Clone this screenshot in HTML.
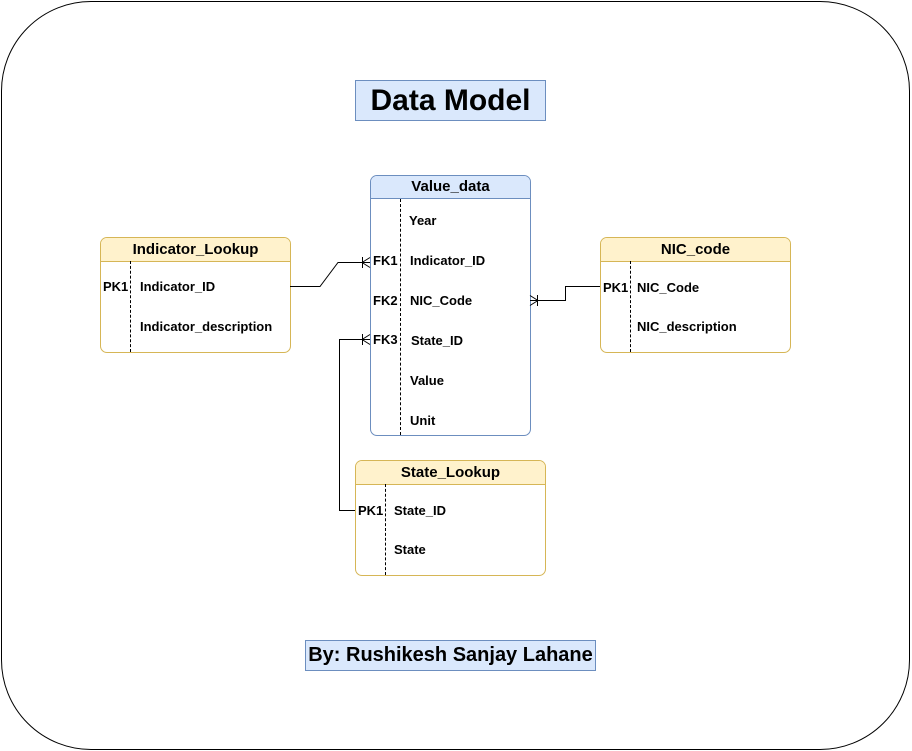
<!DOCTYPE html><html><head><style>
body{margin:0;width:912px;height:751px;background:#fff;font-family:"Liberation Sans",Arial,sans-serif;position:relative;overflow:hidden}
.a{position:absolute;box-sizing:border-box}
.t{position:absolute;font-weight:bold;font-size:13px;color:#000;white-space:nowrap;line-height:16px;margin-top:1px}
.tb{border-radius:7px;overflow:hidden}
.h{position:absolute;left:0;right:0;top:0;font-weight:bold;font-size:15px;text-align:center}
</style></head><body>
<div class="a" style="left:1px;top:1px;width:909px;height:749px;border:1px solid #000;border-radius:90px"></div>
<div class="a" style="left:355px;top:80px;width:191px;height:41px;background:#dae8fc;border:1px solid #6c8ebf;font-weight:bold;font-size:30px;text-align:center;line-height:39px">Data Model</div>
<div class="a" style="left:305px;top:640px;width:291px;height:31px;background:#dae8fc;border:1px solid #6c8ebf;font-weight:bold;font-size:20px;text-align:center;line-height:29px;white-space:nowrap">By: Rushikesh Sanjay Lahane</div>

<div class="a tb" style="left:370px;top:175px;width:161px;height:261px;border:1px solid #6c8ebf">
<div class="h" style="height:22px;background:#dae8fc;border-bottom:1px solid #6c8ebf;line-height:22px">Value_data</div></div>
<div class="a" style="left:400px;top:199px;height:236px;border-left:1px dashed #000"></div>
<div class="t" style="left:409px;top:212px">Year</div>
<div class="t" style="left:373px;top:252px">FK1</div><div class="t" style="left:410px;top:252px">Indicator_ID</div>
<div class="t" style="left:373px;top:292px">FK2</div><div class="t" style="left:410px;top:292px">NIC_Code</div>
<div class="t" style="left:373px;top:331px">FK3</div><div class="t" style="left:411px;top:332px">State_ID</div>
<div class="t" style="left:410px;top:372px">Value</div>
<div class="t" style="left:410px;top:412px">Unit</div>

<div class="a tb" style="left:100px;top:237px;width:191px;height:116px;border:1px solid #d6b656">
<div class="h" style="height:23px;background:#fff2cc;border-bottom:1px solid #d6b656;line-height:23px">Indicator_Lookup</div></div>
<div class="a" style="left:130px;top:261px;height:91px;border-left:1px dashed #000"></div>
<div class="t" style="left:103px;top:278px">PK1</div><div class="t" style="left:140px;top:278px">Indicator_ID</div>
<div class="t" style="left:140px;top:318px">Indicator_description</div>

<div class="a tb" style="left:600px;top:237px;width:191px;height:116px;border:1px solid #d6b656">
<div class="h" style="height:23px;background:#fff2cc;border-bottom:1px solid #d6b656;line-height:23px">NIC_code</div></div>
<div class="a" style="left:630px;top:261px;height:91px;border-left:1px dashed #000"></div>
<div class="t" style="left:603px;top:279px">PK1</div><div class="t" style="left:637px;top:279px">NIC_Code</div>
<div class="t" style="left:637px;top:318px">NIC_description</div>

<div class="a tb" style="left:355px;top:460px;width:191px;height:116px;border:1px solid #d6b656">
<div class="h" style="height:23px;background:#fff2cc;border-bottom:1px solid #d6b656;line-height:23px">State_Lookup</div></div>
<div class="a" style="left:385px;top:484px;height:91px;border-left:1px dashed #000"></div>
<div class="t" style="left:358px;top:502px">PK1</div><div class="t" style="left:394px;top:502px">State_ID</div>
<div class="t" style="left:394px;top:541px">State</div>

<svg class="a" style="left:0;top:0" width="912" height="751" fill="none" stroke="#000" stroke-width="1">
<path d="M290 286.5H320L338 262.5H370M362 262.5l8-5M362 262.5l8 5M362.5 257v11"/>
<path d="M530 300.5H565.5V286.5H600M538 300.5l-8-5M538 300.5l-8 5M537.5 295v11"/>
<path d="M355 510.5H339.5V339.5H370M362 339.5l8-5M362 339.5l8 5M362.5 334v11"/>
</svg>
</body></html>
